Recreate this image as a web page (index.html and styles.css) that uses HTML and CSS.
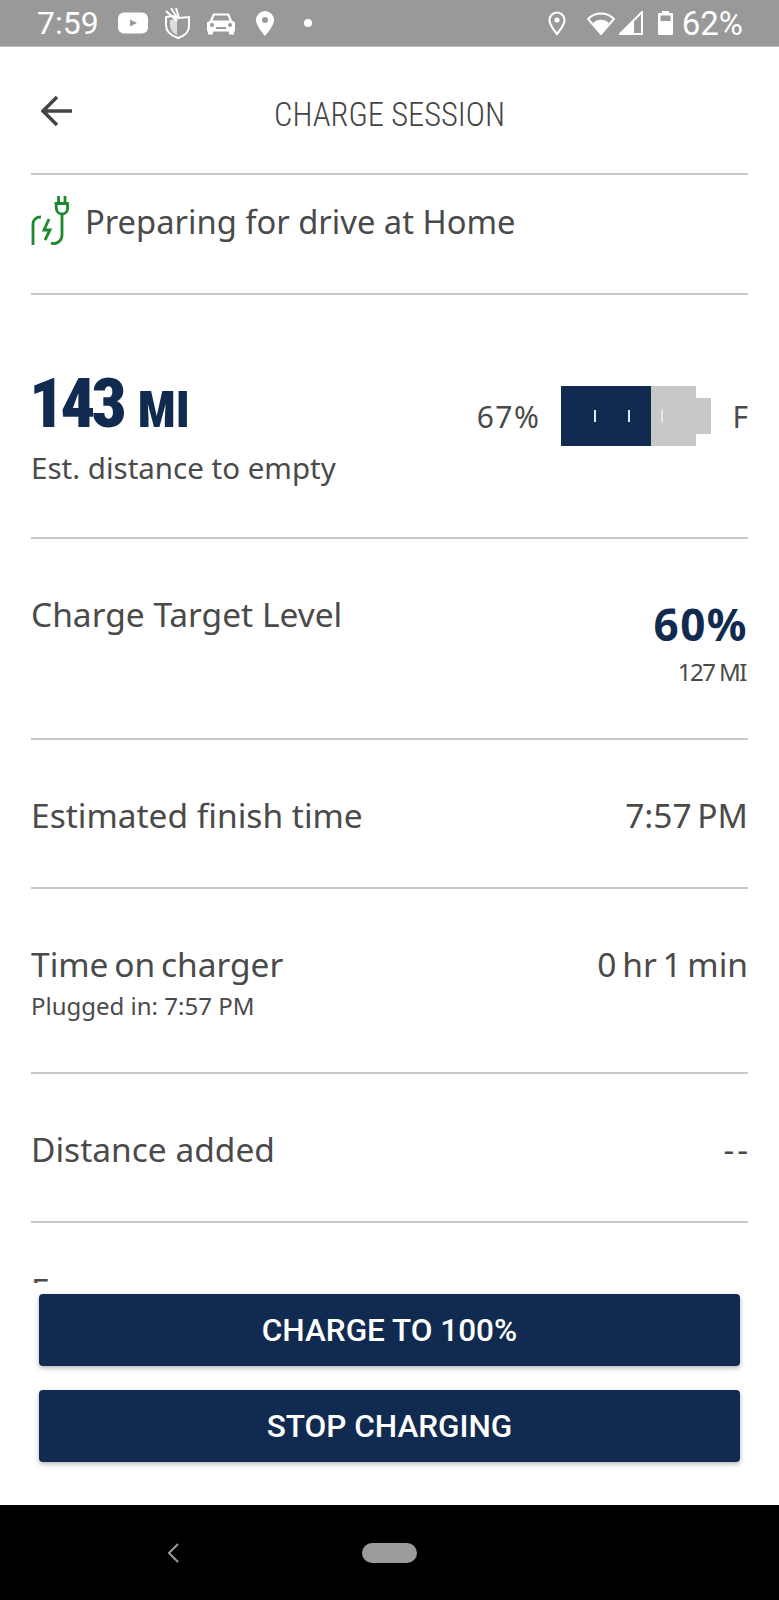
FILE: index.html
```html
<!DOCTYPE html>
<html lang="en">
<head>
    <meta charset="UTF-8">
    <meta name="viewport" content="width=device-width, initial-scale=1.0">
    <title>Charge Session</title>
    <link rel="stylesheet" href="styles.css">
</head>
<body>
    <div class="screen">
        <!-- Status bar -->
        <div class="status-bar">
            <span class="clock">7:59</span>
            <svg class="ic-youtube" viewBox="0 0 30 22"><rect width="30" height="21" y="0.5" rx="6" fill="#fff"/><path d="M12 7.5l7 3.5-7 3.5z" fill="#999"/></svg>
            <svg class="ic-shield" viewBox="0 0 28 32"><path d="M9 9l7 2 10-1v9c0 6-5 10-11 12C9 29 3 25 3 18v-8z" fill="none" stroke="#fff" stroke-width="2"/><path d="M14 12v16c-4-2-7-5-7-10v-5z" fill="#ddd"/><path d="M3 4l11 10M8 1l7 11M13 1l3 10" stroke="#fff" stroke-width="2"/></svg>
            <svg class="ic-car" viewBox="0 0 28 23"><path d="M6 1.5h16l3 7 3 2v9h-1v3h-5v-3H6v3H1v-3H0v-9l3-2z" fill="#fff"/><path d="M7.500 3.500h13l2 5H5.500z" fill="#999"/><circle cx="5" cy="13" r="2" fill="#999"/><circle cx="23" cy="13" r="2" fill="#999"/><rect x="9" y="15" width="10" height="2" fill="#999"/></svg>
            <svg class="ic-pin" viewBox="0 0 18 25"><path fill-rule="evenodd" d="M9 0a9 9 0 0 1 9 9c0 6-9 16-9 16S0 15 0 9a9 9 0 0 1 9-9zm0 6a3 3 0 1 0 0 6 3 3 0 0 0 0-6z" fill="#fff"/></svg>
            <span class="dot"></span>
            <span class="status-right">
                <svg class="ic-pin-line" viewBox="0 0 18 25"><path d="M9 1.500a7.500 7.500 0 0 1 7.500 7.500c0 5-7.500 14-7.500 14S1.500 14 1.500 9A7.500 7.500 0 0 1 9 1.500z" fill="none" stroke="#fff" stroke-width="2.200"/><circle cx="9" cy="9" r="2.600" fill="#fff"/></svg>
                <svg class="ic-wifi" viewBox="0 0 28 23"><path d="M14 22L1 7c7-7.500 19-7.500 26 0z" fill="none" stroke="#fff" stroke-width="2"/><path d="M14 22L6 11c4-4.500 12-4.500 16 0z" fill="#fff"/></svg>
                <svg class="ic-signal" viewBox="0 0 24 24"><path d="M23 1v22H1z" fill="none" stroke="#fff" stroke-width="2"/><path d="M15 10v13H1z" fill="#fff"/></svg>
                <svg class="ic-battery" viewBox="0 0 15 24"><path fill-rule="evenodd" d="M4 2V0h7v2h3a1 1 0 0 1 1 1v20a1 1 0 0 1-1 1H1a1 1 0 0 1-1-1V3a1 1 0 0 1 1-1zM2.500 4.500V10h10V4.500z" fill="#fff"/></svg>
                <span class="battery-pct">62%</span>
            </span>
        </div>

        <div class="top-bar">
            <svg class="back" viewBox="0 0 32 32"><path d="M31 16H3M16 2L2 16l14 14" fill="none" stroke="#444" stroke-width="3.4"/></svg>
            <h1>CHARGE SESSION</h1>
        </div>

        <div class="content">
            <div class="row row-status">
                <svg class="ic-plug" viewBox="0 0 38 51"><g fill="none" stroke="#1d8a2e" stroke-width="2.800"><path d="M27.500 1v7M34 1v7M25 8.500h11.500v6a5.500 5.500 0 0 1-5.500 4.500 5.500 5.500 0 0 1-5.500-4.500zM31 19v21c0 6-6 10-11 8M2 50V29c0-4 3-7 8-7"/><path d="M18 24l-5 11h6l-5 10"/></g></svg>
                <span class="label label-status">Preparing for drive at Home</span>
            </div>

            <div class="row row-range">
                <div>
                    <div class="range"><span class="range-num">143</span><span class="range-unit">MI</span></div>
                    <div class="range-sub">Est. distance to empty</div>
                </div>
                <div class="gauge">
                    <span class="gauge-pct">67%</span>
                    <div class="battery">
                        <div class="battery-body">
                            <div class="battery-fill"></div>
                            <i class="tick"></i><i class="tick"></i><i class="tick"></i>
                        </div>
                        <div class="battery-cap"></div>
                    </div>
                    <span class="gauge-f">F</span>
                </div>
            </div>

            <div class="row row-target">
                <span class="label">Charge Target Level</span>
                <div class="target">
                    <div class="target-pct">60%</div>
                    <div class="target-mi">127 MI</div>
                </div>
            </div>

            <div class="row row-finish">
                <span class="label">Estimated finish time</span>
                <span class="label tight">7:57 PM</span>
            </div>

            <div class="row row-time">
                <div>
                    <div class="label tight">Time on charger</div>
                    <div class="small">Plugged in: 7:57 PM</div>
                </div>
                <span class="label tight">0 hr 1 min</span>
            </div>

            <div class="row row-finish">
                <span class="label">Distance added</span>
                <span class="label dashes">--</span>
            </div>

            <div class="row row-next">
                <span class="label">Energy</span>
            </div>
        </div>

        <div class="actions">
            <button class="btn">CHARGE TO 100%</button>
            <button class="btn">STOP CHARGING</button>
        </div>

        <div class="nav-bar">
            <svg class="nav-back" viewBox="0 0 14 20"><path d="M12 1L3 10l9 9" fill="none" stroke="#9b9b9b" stroke-width="2"/></svg>
            <span class="nav-home"></span>
        </div>
    </div>
</body>
</html>
```

FILE: styles.css
```css
body {
    margin: 0;
    background-color: #fff;
    font-family: "Noto Sans", Arial, sans-serif;
    color: #4a4a4a;
}

.screen {
    width: 779px;
    height: 1600px;
    display: flex;
    flex-direction: column;
    overflow: hidden;
}

/* Status bar */
.status-bar {
    height: 47px;
    flex: none;
    box-sizing: border-box;
    background-color: #999;
    border-bottom: 1px solid #bbb;
    display: flex;
    align-items: center;
    padding: 0 36px 0 37px;
    color: #fff;
    font-family: Roboto, sans-serif;
}

.status-bar svg {
    flex: none;
    display: block;
}

.clock {
    font-size: 32px;
    width: 81px;
}

.ic-youtube { width: 30px; height: 22px; margin-right: 15px; }
.ic-shield { width: 28px; height: 32px; margin-right: 16px; }
.ic-car { width: 28px; height: 23px; margin-right: 21px; }
.ic-pin { width: 18px; height: 25px; }

.dot {
    width: 8px;
    height: 8px;
    margin-left: 30px;
    border-radius: 50%;
    background-color: #fff;
}

.status-right {
    margin-left: auto;
    display: flex;
    align-items: center;
}

.ic-pin-line { width: 18px; height: 25px; margin-right: 21px; }
.ic-wifi { width: 28px; height: 23px; margin-right: 4px; }
.ic-signal { width: 24px; height: 24px; margin-right: 15px; }
.ic-battery { width: 15px; height: 24px; margin-right: 9px; }

.battery-pct {
    font-size: 33px;
}

/* Header */
.top-bar {
    height: 128px;
    flex: none;
    box-sizing: border-box;
    margin: 0 31px;
    border-bottom: 2px solid #c8c8c8;
    display: flex;
    align-items: center;
    justify-content: center;
    position: relative;
    padding-top: 9px;
}

.top-bar h1 {
    margin: 0;
    font-family: Roboto, sans-serif;
    font-weight: 300;
    font-size: 32.500px;
    font-stretch: 75%;
    color: #444;
}

.back {
    position: absolute;
    left: 10px;
    top: 48px;
    width: 32px;
    height: 32px;
}

/* Rows */
.content {
    flex: 1;
    overflow: hidden;
    padding: 0 31px;
}

.row {
    box-sizing: border-box;
    border-bottom: 2px solid #c8c8c8;
    display: flex;
    justify-content: space-between;
    align-items: flex-start;
}

.label {
    font-size: 33.500px;
    line-height: 40px;
}

.label-status {
    font-size: 32.700px;
}

.tight {
    word-spacing: -3px;
}

.dashes {
    letter-spacing: 3px;
    margin-right: -3px;
}

.small {
    font-size: 24px;
    line-height: 30px;
    margin-top: 7px;
}

.row-status {
    height: 120px;
    justify-content: flex-start;
    padding-top: 20px;
    gap: 16px;
}

.row-status .label {
    margin-top: 7px;
}

.ic-plug {
    width: 38px;
    height: 51px;
    flex: none;
}

.row-range {
    height: 244px;
    padding-top: 74px;
}

.range {
    color: #112b50;
    font-family: Roboto, sans-serif;
    font-weight: 900;
    display: flex;
    align-items: baseline;
    height: 70px;
    margin-left: -2px;
}

.range-num {
    font-size: 69px;
    letter-spacing: -4px;
    line-height: 70px;
    font-stretch: 75%;
    margin-right: 15px;
}

.range-unit {
    font-size: 50px;
    font-stretch: 75%;
}

.range-sub {
    font-size: 29.500px;
    line-height: 36px;
    margin-top: 11px;
}

.gauge {
    display: flex;
    align-items: center;
    margin-top: 17px;
    font-size: 30px;
}

.gauge-pct {
    margin-right: 21px;
    letter-spacing: 1.500px;
}

.gauge-f {
    margin-left: 21px;
}

.battery {
    display: flex;
    align-items: center;
}

.battery-body {
    width: 135px;
    height: 60px;
    background-color: #c8c8c8;
    position: relative;
}

.battery-fill {
    width: 90px;
    height: 60px;
    background-color: #112b50;
}

.tick {
    position: absolute;
    top: 24px;
    width: 2px;
    height: 12px;
    background-color: #dce8f2;
}

.tick:nth-of-type(1) { left: 33px; }
.tick:nth-of-type(2) { left: 67px; }
.tick:nth-of-type(3) { left: 100px; }

.battery-cap {
    width: 15px;
    height: 36px;
    background-color: #c8c8c8;
}

.row-target {
    height: 201px;
    padding-top: 55px;
}

.target {
    text-align: right;
}

.target-pct {
    color: #112b50;
    font-weight: 700;
    font-size: 44px;
    letter-spacing: 1.500px;
    line-height: 50px;
    margin-top: 5px;
}

.target-mi {
    font-size: 24px;
    letter-spacing: -1.500px;
    line-height: 30px;
    margin-top: 8px;
    margin-right: 2px;
}

.row-finish {
    height: 149px;
    padding-top: 55px;
}

.row-time {
    height: 185px;
    padding-top: 55px;
}

.row-next {
    height: 149px;
    padding-top: 47px;
}

/* Buttons */
.actions {
    flex: none;
    height: 222px;
    box-sizing: border-box;
    background-color: #fff;
    padding: 11px 39px 0;
    display: flex;
    flex-direction: column;
    gap: 24px;
}

.btn {
    height: 72px;
    flex: none;
    border: none;
    border-radius: 4px;
    background-color: #112b50;
    color: #fff;
    font-family: Roboto, sans-serif;
    font-weight: 500;
    font-size: 31.500px;
    box-shadow: 0 2px 5px rgba(0, 0, 0, 0.3);
}

/* Navigation bar */
.nav-bar {
    height: 95px;
    flex: none;
    background-color: #000;
    display: flex;
    align-items: center;
    justify-content: center;
    position: relative;
}

.nav-back {
    position: absolute;
    left: 166px;
    top: 38px;
    width: 14px;
    height: 20px;
}

.nav-home {
    width: 55px;
    height: 20px;
    border-radius: 10px;
    background-color: #9b9b9b;
}
```
